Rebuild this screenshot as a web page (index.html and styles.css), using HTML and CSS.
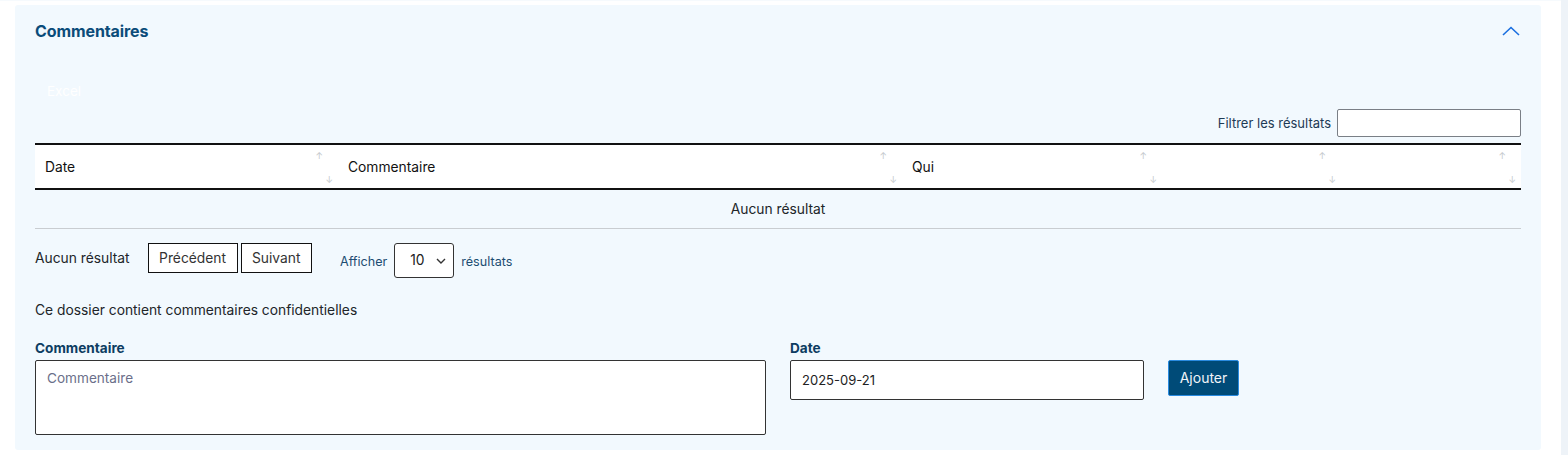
FILE: index.html
```html
<!DOCTYPE html>
<html lang="fr">
<head>
<meta charset="utf-8">
<title>Commentaires</title>
<link rel="stylesheet" href="styles.css">
</head>
<body>
<div class="page">
  <main class="main">
    <section class="card">
      <div class="card-head">
        <h2 class="card-title">Commentaires</h2>
        <svg class="chevron" width="18" height="10" viewBox="0 0 18 10"><polyline points="1,9 9,1.5 17,9" fill="none" stroke="#1a6fe0" stroke-width="1.6"/></svg>
      </div>
      <div class="tools">
        <button class="excel" type="button">Excel</button>
      </div>
      <div class="filter">
        <label class="filter-label" for="f">Filtrer les résultats</label>
        <input class="filter-input" id="f" type="text">
      </div>
      <table class="grid">
        <colgroup>
          <col class="c1"><col class="c2"><col class="c3"><col class="c4"><col class="c5">
        </colgroup>
        <thead>
          <tr>
            <th><span>Date</span><i class="up">↑</i><i class="down">↓</i></th>
            <th><span>Commentaire</span><i class="up">↑</i><i class="down">↓</i></th>
            <th><span>Qui</span><i class="up">↑</i><i class="down">↓</i></th>
            <th><i class="up">↑</i><i class="down">↓</i></th>
            <th><i class="up">↑</i><i class="down">↓</i></th>
          </tr>
        </thead>
        <tbody>
          <tr><td colspan="5" class="empty">Aucun résultat</td></tr>
        </tbody>
      </table>
      <div class="pager">
        <div class="pager-left">
          <span class="info">Aucun résultat</span>
          <div class="btns">
            <button class="pbtn" type="button">Précédent</button>
            <button class="pbtn" type="button">Suivant</button>
          </div>
        </div>
        <div class="length">
          <span class="len-label">Afficher</span>
          <div class="select-wrap">
            <select class="len-select"><option>10</option><option>25</option><option>50</option></select>
            <svg class="sel-arrow" width="10" height="6" viewBox="0 0 10 6"><polyline points="1,1 5,5 9,1" fill="none" stroke="#333" stroke-width="1.4"/></svg>
          </div>
          <span class="len-label">résultats</span>
        </div>
      </div>
      <p class="note">Ce dossier contient commentaires confidentielles</p>
      <div class="form">
        <div class="field f-comment">
          <label class="flabel" for="c">Commentaire</label>
          <textarea id="c" class="textarea" placeholder="Commentaire"></textarea>
        </div>
        <div class="field f-date">
          <label class="flabel" for="d">Date</label>
          <input id="d" class="input" type="text" value="2025-09-21">
        </div>
        <div class="field f-btn">
          <button class="add" type="button">Ajouter</button>
        </div>
      </div>
    </section>
  </main>
  <div class="scroll-strip"></div>
</div>
</body>
</html>
```
FILE: styles.css
```css
* { box-sizing: border-box; }
html, body { margin: 0; padding: 0; }
body {
  background: #ffffff;
  font-family: Inter, "Noto Sans", "Liberation Sans", sans-serif;
  color: #212529;
  font-size: 13.8px;
  width: 1568px;
  height: 455px;
  overflow: hidden;
}
.page { display: flex; height: 455px; }
.main { flex: 0 0 1561px; padding: 5px 20px 0 15px; border-top: 1px solid #f6fafd; }
.scroll-strip { flex: 0 0 7px; background: #eef3f8; }

.card {
  width: 1526px;
  height: 445px;
  background: #f2f9fe;
  border-radius: 3px;
  padding: 11px 20px 0 20px;
  margin-top: -1px;
}
.card-head {
  height: 30px;
  display: flex;
  align-items: center;
  justify-content: space-between;
}
.card-title {
  margin: 0;
  font-size: 16px;
  font-weight: 700;
  color: #0b4c7a;
  letter-spacing: -0.1px;
}
.chevron { margin-right: 1px; }

.tools { margin-top: 32px; height: 26px; display: flex; align-items: center; }
.excel {
  background: transparent;
  border: 0;
  color: #ffffff;
  font-family: inherit;
  font-size: 13.5px;
  padding: 0 12px;
  height: 26px;
}

.filter {
  margin-top: 5px;
  height: 28px;
  display: flex;
  justify-content: flex-end;
  align-items: center;
  gap: 6px;
}
.filter-label { color: #1d3a55; font-size: 13px; }
.filter-input {
  width: 184px;
  height: 28px;
  border: 1px solid #7a7f86;
  border-radius: 2px;
  background: #fff;
}

.grid {
  margin-top: 6px;
  width: 1486px;
  border-collapse: collapse;
  table-layout: fixed;
}
.c1 { width: 303px; }
.c2 { width: 564px; }
.c3 { width: 260px; }
.c4 { width: 179px; }
.c5 { width: 180px; }
.grid thead tr { background: #ffffff; border-top: 2px solid #111; border-bottom: 2px solid #111; }
.grid th {
  position: relative;
  height: 45px;
  padding: 0 10px;
  text-align: left;
  font-weight: 400;
  font-size: 13.8px;
  color: #111;
}
.grid th i {
  position: absolute;
  font-style: normal;
  font-size: 9px;
  line-height: 9px;
  color: #c4c8cc;
}
.grid th .up { top: 6px; right: 15px; }
.grid th .down { bottom: 4px; right: 5px; }
.grid td.empty {
  height: 39px;
  text-align: center;
  border-bottom: 1px solid #c9cdd1;
  color: #212529;
  font-size: 13.8px;
}

.pager {
  margin-top: 14px;
  display: flex;
  align-items: flex-start;
  gap: 28px;
}
.pager-left { display: flex; align-items: center; height: 30px; gap: 18px; }
.btns { display: flex; gap: 3px; }
.pbtn {
  height: 30px;
  background: #fff;
  border: 1px solid #111;
  font-family: inherit;
  font-size: 13.8px;
  color: #333;
  padding: 0 10.5px;
  border-radius: 0;
}
.length { display: flex; align-items: center; height: 35px; gap: 7px; padding-top: 3px; }
.len-label { color: #1d4d72; font-size: 12.6px; }
.select-wrap { position: relative; width: 60px; height: 35px; margin-top: -3px; }
.len-select {
  appearance: none;
  -webkit-appearance: none;
  width: 60px;
  height: 35px;
  border: 1px solid #333;
  border-radius: 3px;
  background: #fff;
  font-family: inherit;
  font-size: 13.8px;
  color: #222;
  padding: 0 0 0 15px;
}
.sel-arrow { position: absolute; right: 8px; top: 15px; pointer-events: none; }

.note { margin: 24px 0 0 0; line-height: 16px; font-size: 13.8px; color: #212529; }

.form { margin-top: 22px; display: flex; align-items: flex-start; }
.field { display: flex; flex-direction: column; }
.f-comment { width: 731px; }
.f-date { width: 354px; margin-left: 24px; }
.f-btn { margin-left: 24px; padding-top: 20px; }
.flabel {
  font-size: 13.6px;
  font-weight: 700;
  color: #0d3d62;
  line-height: 16px;
  margin-bottom: 4px;
}
.textarea {
  width: 731px;
  height: 75px;
  border: 1px solid #333;
  border-radius: 2px;
  background: #fff;
  resize: none;
  padding: 9px 11px;
  font-family: inherit;
  font-size: 13.6px;
}
.textarea::placeholder { color: #6b6f8a; }
.input {
  width: 354px;
  height: 40px;
  border: 1px solid #333;
  border-radius: 2px;
  background: #fff;
  padding: 0 11px;
  font-family: inherit;
  font-size: 13px;
  color: #222;
}
.add {
  width: 71px;
  height: 36px;
  background: #004b78;
  border: 1px solid #2a8be0;
  border-radius: 2px;
  color: #f0f4f8;
  font-family: inherit;
  font-size: 14px;
}
```
